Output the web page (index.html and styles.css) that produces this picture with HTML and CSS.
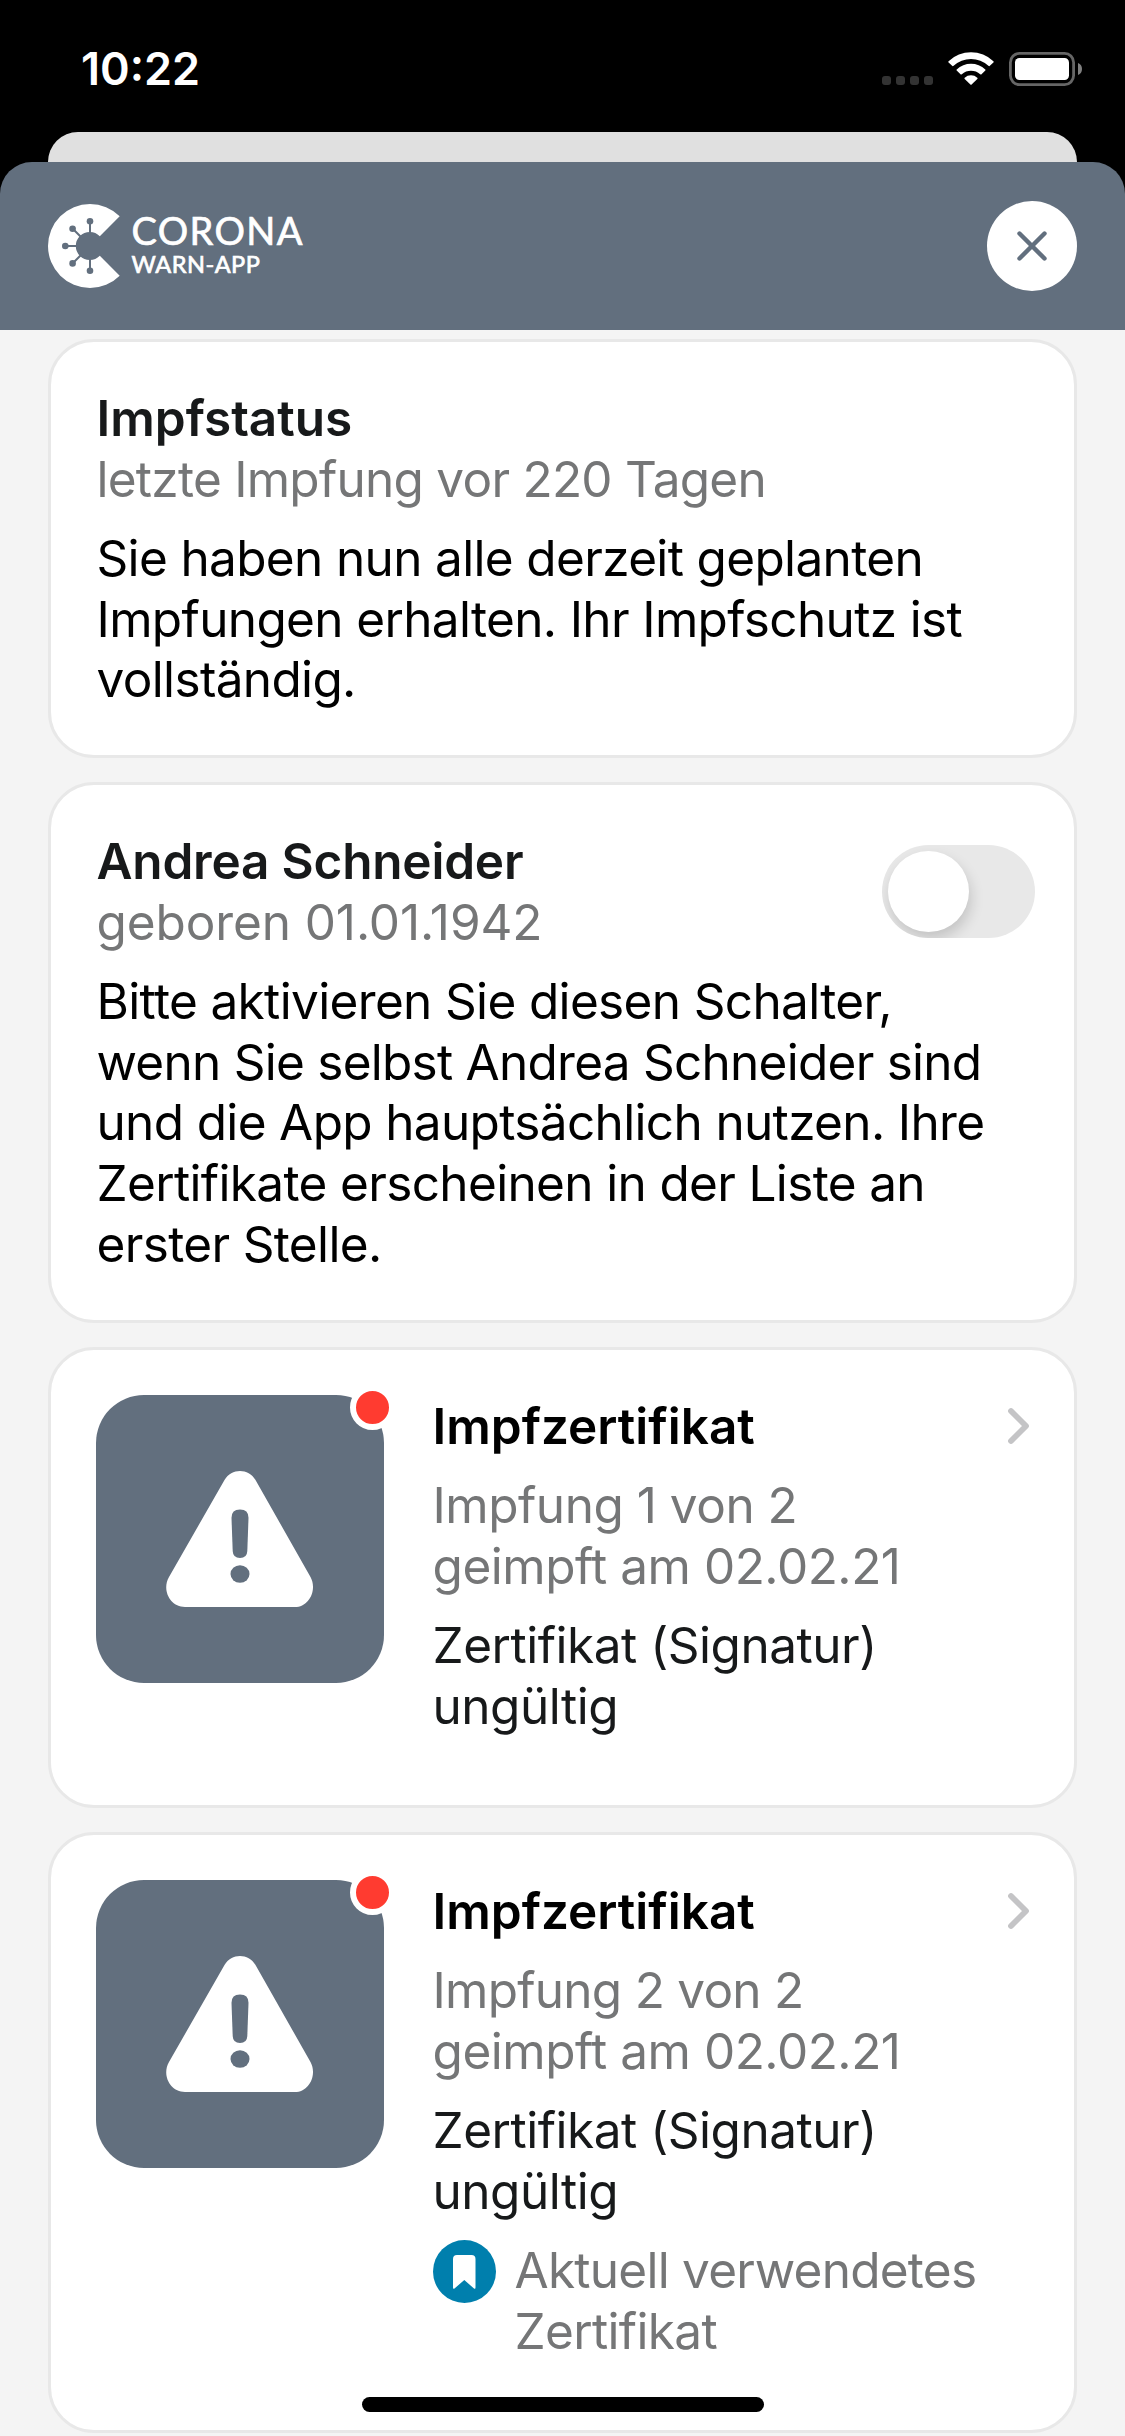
FILE: index.html
```html
<!DOCTYPE html>
<html lang="de">
<head>
<meta charset="utf-8">
<title>Corona-Warn-App</title>
<link rel="stylesheet" href="styles.css">
</head>
<body>
<div class="screen">
  <div class="status-bar">
    <span class="clock">10:22</span>
    <div class="indicators">
      <div class="signal"><i></i><i></i><i></i><i></i></div>
      <svg class="wifi" width="46" height="33" viewBox="0 0 46 33">
        <path d="M0.6 9.2 A32.5 32.5 0 0 1 45.4 9.2 Q46 9.9 45.4 10.5 L41.6 14 Q41 14.4 40.4 13.8 A25.6 25.6 0 0 0 5.6 13.8 Q5 14.4 4.4 14 L0.6 10.5 Q0 9.9 0.6 9.2Z"/>
        <path d="M8.7 17.4 A21 21 0 0 1 37.3 17.4 Q37.9 18 37.3 18.6 L33.5 22.3 Q32.9 22.8 32.2 22.2 A14 14 0 0 0 13.8 22.2 Q13.1 22.8 12.5 22.3 L8.7 18.6 Q8.1 18 8.7 17.4Z"/>
        <path d="M16.7 25.7 A9.5 9.5 0 0 1 29.3 25.7 Q29.9 26.3 29.3 26.9 L23.6 32.5 Q23 33 22.4 32.5 L16.7 26.9 Q16.1 26.3 16.7 25.7Z"/>
      </svg>
      <svg class="battery" width="73" height="34" viewBox="0 0 73 34">
        <rect x="1.4" y="1.4" width="63.2" height="31.2" rx="9" fill="none" stroke="#666" stroke-width="2.8"/>
        <rect x="6" y="6" width="54" height="22" rx="4.5" fill="#fff"/>
        <path d="M69 11 Q73 12.5 73 17 Q73 21.5 69 23Z" fill="#808080"/>
      </svg>
    </div>
  </div>
  <div class="sheet-behind"></div>
  <header class="header">
    <div class="logo">
      <svg width="72" height="84" viewBox="0 0 72 84">
        <path fill="#fff" d="M71.7 12.3 A42 42 0 1 0 71.7 71.7 L51.8 51.8 A14 14 0 1 1 51.8 32.2 Z"/>
        <g stroke="#626f7e" stroke-width="2" fill="#626f7e">
          <path d="M42 30V17M33 33L25 25M30 42H17M33 51L25 59M42 54V67"/>
          <g stroke="none"><circle cx="42" cy="17.3" r="3.3"/><circle cx="24.6" cy="24.7" r="3.3"/><circle cx="17.3" cy="42" r="3.3"/><circle cx="24.6" cy="59.4" r="3.3"/><circle cx="42" cy="66.7" r="3.3"/></g>
        </g>
      </svg>
      <div class="wordmark"><span class="word-top">CORONA</span><span class="word-bottom">WARN-APP</span></div>
    </div>
    <button class="close" aria-label="Schließen">
      <svg width="30" height="30" viewBox="0 0 30 30"><path d="M2.5 2.5L27.5 27.5M27.5 2.5L2.5 27.5" stroke="#626f7e" stroke-width="4.4" stroke-linecap="round"/></svg>
    </button>
  </header>
  <main class="cards">
    <section class="card">
      <h2 class="soft">Impfstatus</h2>
      <p class="muted tight">letzte Impfung vor 220 Tagen</p>
      <p class="text">Sie haben nun alle derzeit geplanten<br>Impfungen erhalten. Ihr Impfschutz ist<br>vollständig.</p>
    </section>
    <section class="card card-person">
      <div class="person">
        <div>
          <h2 class="soft name">Andrea Schneider</h2>
          <p class="muted birthdate">geboren 01.01.1942</p>
        </div>
        <div class="switch"></div>
      </div>
      <p class="text">Bitte aktivieren Sie diesen Schalter,<br><span class="tight">wenn Sie selbst Andrea Schneider sind</span><br>und die App hauptsächlich nutzen. Ihre<br>Zertifikate erscheinen in der Liste an<br>erster Stelle.</p>
    </section>
    <section class="card certificate">
      <div class="tile">
        <svg width="147" height="137" viewBox="0 0 147 137"><path fill="#fff" d="M58.5 9 C65.5 -3 82.5 -3 89.5 9 L144.500 106 C151.5 119 143 136 129 136 H19 C4 136 -4.5 119 3 106 Z"/><path fill="#626f7e" d="M74 38.5 Q82.6 38.5 82.5 47 L81.3 80 Q81 87 74 87 Q67 87 66.7 80 L65.5 47 Q65.4 38.5 74 38.5Z"/><ellipse cx="74" cy="103" rx="9.5" ry="8.7" fill="#626f7e"/></svg>
        <span class="dot"></span>
      </div>
      <div class="details">
        <div class="title"><h2>Impfzertifikat</h2>
          <svg class="chevron" width="24" height="38" viewBox="0 0 24 38"><path d="M4 4L19 19L4 34" fill="none" stroke="#c4c4c6" stroke-width="5.8" stroke-linecap="round" stroke-linejoin="round"/></svg></div>
        <p class="muted text loose">Impfung 1 von 2<br>geimpft am 02.02.21</p>
        <p class="soft text loose">Zertifikat (Signatur)<br>ungültig</p>
      </div>
    </section>
    <section class="card certificate">
      <div class="tile">
        <svg width="147" height="137" viewBox="0 0 147 137"><path fill="#fff" d="M58.5 9 C65.5 -3 82.5 -3 89.5 9 L144.500 106 C151.5 119 143 136 129 136 H19 C4 136 -4.5 119 3 106 Z"/><path fill="#626f7e" d="M74 38.5 Q82.6 38.5 82.5 47 L81.3 80 Q81 87 74 87 Q67 87 66.7 80 L65.5 47 Q65.4 38.5 74 38.5Z"/><ellipse cx="74" cy="103" rx="9.5" ry="8.7" fill="#626f7e"/></svg>
        <span class="dot"></span>
      </div>
      <div class="details">
        <div class="title"><h2>Impfzertifikat</h2>
          <svg class="chevron" width="24" height="38" viewBox="0 0 24 38"><path d="M4 4L19 19L4 34" fill="none" stroke="#c4c4c6" stroke-width="5.8" stroke-linecap="round" stroke-linejoin="round"/></svg></div>
        <p class="muted text loose"><span class="tight">Impfung 2 von 2</span><br>geimpft am 02.02.21</p>
        <p class="soft text loose">Zertifikat (Signatur)<br>ungültig</p>
        <div class="current muted">
          <svg width="63" height="63" viewBox="0 0 63 63"><circle cx="31.5" cy="31.5" r="31.5" fill="#007fad"/><path fill="#fff" d="M20 19 Q20 15 24 15 H38.5 Q42.5 15 42.5 19 V47.5 Q42.5 49.5 41 48.5 L31.3 40 L21.5 48.5 Q20 49.5 20 47.5Z"/></svg>
          <p><span class="tight">Aktuell verwendetes</span><br>Zertifikat</p>
        </div>
      </div>
    </section>
  </main>
  <div class="home-indicator"></div>
</div>
</body>
</html>
```
FILE: styles.css
```css
* { box-sizing: border-box; }
body, h2, p { margin: 0; }
body {
  background: #000;
  font-family: Inter, "Liberation Sans", sans-serif;
  font-size: 49.5px;
  line-height: 60.7px;
  letter-spacing: -0.65px;
  color: #000;
}
.screen {
  position: relative;
  display: flex;
  flex-direction: column;
  width: 1125px;
  height: 2436px;
  overflow: hidden;
}
.status-bar {
  display: flex;
  justify-content: space-between;
  align-items: flex-start;
  flex: 0 0 132px;
  padding: 0 43px 0 81px;
  color: #fff;
}
.clock {
  padding-top: 41px;
  font-size: 45px;
  font-weight: 600;
  line-height: 56px;
  letter-spacing: 0;
}
.indicators { display: flex; align-items: flex-start; padding-top: 52px; }
.signal { display: flex; gap: 5px; padding-top: 24px; margin-right: 15px; }
.signal i { width: 9px; height: 9px; border-radius: 3px; background: #333; }
.wifi { fill: #fff; margin-right: 15px; }
.sheet-behind {
  flex: 0 0 62px;
  margin: 0 48px -32px;
  border-radius: 30px 30px 0 0;
  background: #e0e0e0;
}
.header {
  position: relative;
  display: flex;
  justify-content: space-between;
  align-items: center;
  flex: 0 0 168px;
  padding: 0 48px;
  border-radius: 32px 32px 0 0;
  background: #626f7e;
  color: #fff;
}
.logo { display: flex; gap: 11.5px; }
.logo svg { display: block; }
.wordmark {
  display: flex;
  flex-direction: column;
  align-items: flex-start;
  font-family: Lato, "Open Sans", sans-serif;
  -webkit-text-stroke: 0.7px #fff;
}
.word-top { margin-top: 8px; font-size: 38px; line-height: 36px; letter-spacing: 1.4px; }
.word-bottom { margin-top: 2px; font-size: 23.5px; line-height: 28px; letter-spacing: 0.5px; }
.close {
  display: flex;
  align-items: center;
  justify-content: center;
  width: 90px;
  height: 90px;
  padding: 0;
  border: 0;
  border-radius: 50%;
  background: #fff;
}
.cards {
  display: flex;
  flex-direction: column;
  gap: 24px;
  flex: 1;
  padding: 9px 48px 0;
  background: #f4f4f4;
}
.card {
  flex: none;
  padding: 46px 39px 45px 45.5px;
  border: 3px solid #e8e8e8;
  border-radius: 46px;
  background: #fff;
}
.card-person { padding-bottom: 45.5px; }
h2 { font-size: inherit; font-weight: 600; letter-spacing: 0; }
.name { letter-spacing: -0.2px; }
.soft { color: #17191a; }
.muted { color: #757677; }
.text { margin-top: 18.5px; white-space: nowrap; }
.tight { letter-spacing: -0.74px; }
.loose { letter-spacing: -0.48px; }
.birthdate { letter-spacing: -0.1px; }
.person { display: flex; justify-content: space-between; }
.switch {
  width: 153px;
  height: 93px;
  margin-top: 14px;
  padding: 6px;
  border-radius: 47px;
  background: #e8e8e8;
  overflow: hidden;
}
.switch::before {
  content: "";
  display: block;
  width: 81px;
  height: 81px;
  border-radius: 50%;
  background: #fff;
  box-shadow: 2px 7px 14px rgba(0, 0, 0, .16);
}
.certificate {
  display: flex;
  align-items: flex-start;
  gap: 48.5px;
  padding-top: 45px;
  padding-left: 45px;
  padding-bottom: 68.5px;
}
.tile {
  position: relative;
  display: flex;
  justify-content: center;
  flex: 0 0 288px;
  height: 288px;
  padding: 76px 2px 0 0;
  border-radius: 48px;
  background: #626f7e;
}
.dot {
  position: absolute;
  top: -10px;
  right: -11px;
  width: 45px;
  height: 45px;
  border: 6px solid #fff;
  border-radius: 50%;
  background: #ff3b30;
}
.details { flex: 1; padding-top: 1px; }
.title { display: flex; justify-content: space-between; }
.chevron { margin: 11px 4px 0 0; }
.current { display: flex; gap: 19px; margin-top: 18.5px; }
.current svg { flex: none; }
.home-indicator {
  position: absolute;
  left: 362px;
  top: 2397px;
  width: 402px;
  height: 15px;
  border-radius: 8px;
  background: #000;
}
```
